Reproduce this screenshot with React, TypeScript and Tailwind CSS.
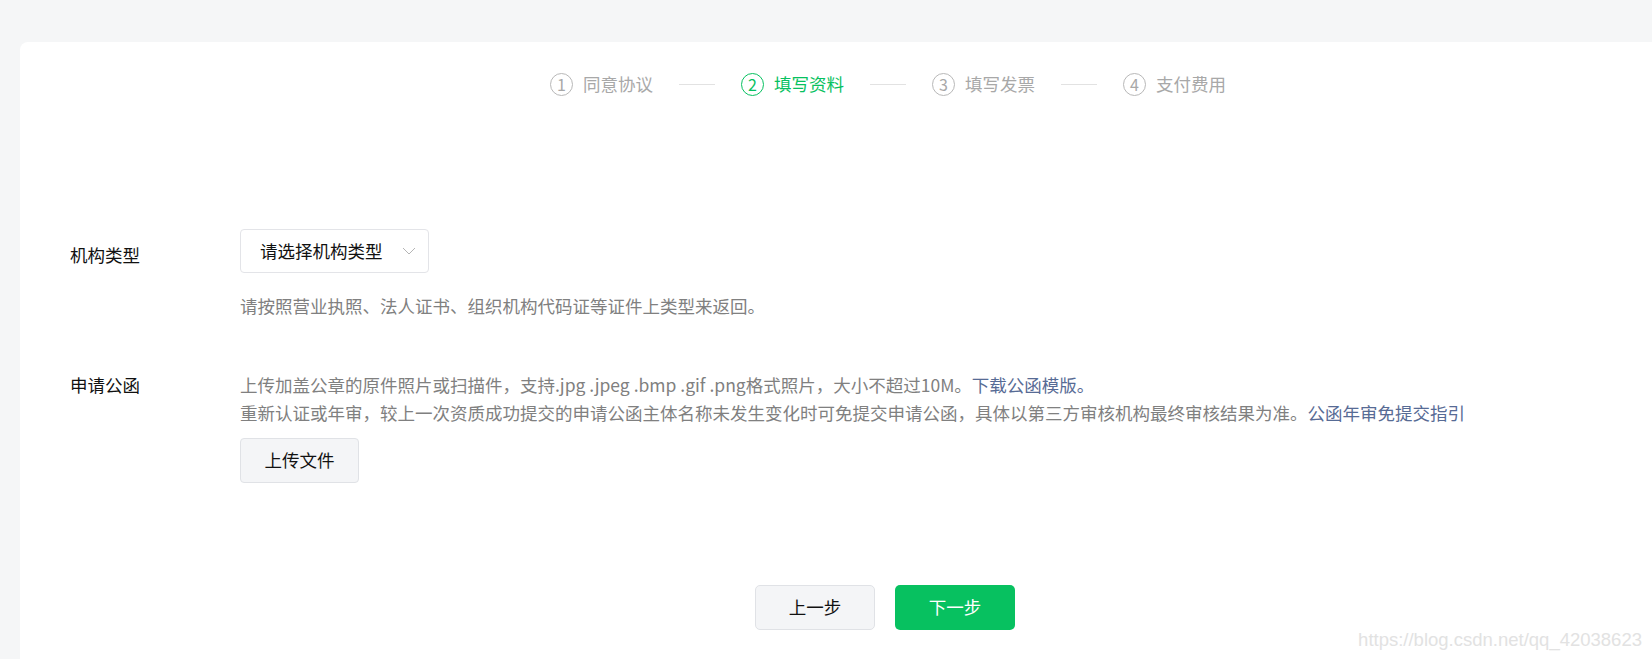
import React from "react";

const font = {
  fontFamily: '"Noto Sans CJK SC", "Noto Sans", sans-serif',
};

function Step({ n, label, active }: { n: number; label: string; active?: boolean }) {
  return (
    <div className="flex items-center gap-[10px]">
      <div
        className={
          "flex h-[23px] w-[23px] items-center justify-center rounded-full border text-[16px] leading-none " +
          (active ? "border-[#07c160] text-[#07c160]" : "border-[#b8b8b8] text-[#a8a8a8]")
        }
      >
        {n}
      </div>
      <span className={"text-[17.5px] leading-[28px] " + (active ? "text-[#07c160]" : "text-[#a8a8a8]")}>
        {label}
      </span>
    </div>
  );
}

function Line() {
  return <div className="mx-[26px] h-px w-[36px] bg-[#e2e2e2]" />;
}

export default function App() {
  return (
    <div className="relative h-[659px] w-[1652px] overflow-hidden bg-[#f5f6f7] pl-[20px] pt-[42px]" style={font}>
      <div className="h-[700px] w-[1730px] rounded-tl-[8px] bg-white pt-[28px]">
        <div className="flex items-center justify-center pl-[6px]">
          <Step n={1} label="同意协议" />
          <Line />
          <Step n={2} label="填写资料" active />
          <Line />
          <Step n={3} label="填写发票" />
          <Line />
          <Step n={4} label="支付费用" />
        </div>

        <div className="mt-[131px] flex pl-[50px]">
          <div className="w-[170px] pt-[12px] text-[17.5px] leading-[28px] text-[#111111]">机构类型</div>
          <div className="flex flex-col">
            <div className="flex h-[44px] w-[189px] items-center justify-between rounded-[4px] border border-[#e3e4e8] pl-[19px] pr-[12px]">
              <span className="text-[17.5px] leading-[28px] text-[#111111]">请选择机构类型</span>
              <svg width="14" height="8" viewBox="0 0 14 8" fill="none">
                <path d="M1 1l6 6 6-6" stroke="#b5b5b5" strokeWidth="1" />
              </svg>
            </div>
            <div className="mt-[19px] text-[17.5px] leading-[28px] text-[#808080]">
              请按照营业执照、法人证书、组织机构代码证等证件上类型来返回。
            </div>
          </div>
        </div>

        <div className="mt-[51px] flex pl-[50px]">
          <div className="w-[170px] text-[17.5px] leading-[28px] text-[#111111]">申请公函</div>
          <div className="flex flex-col">
            <div className="text-[17.5px] leading-[28px] text-[#808080]">
              上传加盖公章的原件照片或扫描件，支持.jpg .jpeg .bmp .gif .png格式照片，大小不超过10M。
              <span className="text-[#576b95]">下载公函模版。</span>
            </div>
            <div className="text-[17.5px] leading-[28px] text-[#808080]">
              重新认证或年审，较上一次资质成功提交的申请公函主体名称未发生变化时可免提交申请公函，具体以第三方审核机构最终审核结果为准。
              <span className="text-[#576b95]">公函年审免提交指引</span>
            </div>
            <div className="mt-[11px]">
              <button className="h-[45px] w-[119px] rounded-[4px] border border-[#e0e2e6] bg-[#f4f5f7] text-[17.5px] text-[#111111]">
                上传文件
              </button>
            </div>
          </div>
        </div>

        <div className="mt-[102px] flex justify-center gap-[20px]">
          <button className="h-[45px] w-[120px] rounded-[5px] border border-[#e0e2e6] bg-[#f4f5f7] text-[17.5px] text-[#111111]">
            上一步
          </button>
          <button className="h-[45px] w-[120px] rounded-[5px] bg-[#07c160] text-[17.5px] text-white">
            下一步
          </button>
        </div>
      </div>

      <div
        className="absolute right-[10px] top-[627px] text-[18.5px] leading-[26px] text-[#e2e2e2]"
        style={{ fontFamily: '"Liberation Sans", Arial, sans-serif' }}
      >
        https://blog.csdn.net/qq_42038623
      </div>
    </div>
  );
}
